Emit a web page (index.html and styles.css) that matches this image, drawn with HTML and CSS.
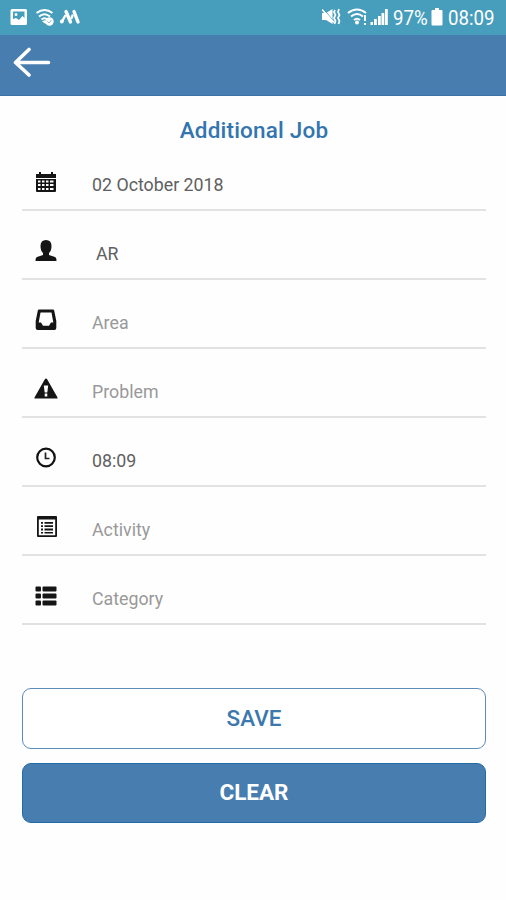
FILE: index.html
```html
<!DOCTYPE html>
<html lang="en">
<head>
<meta charset="utf-8">
<title>Additional Job</title>
<link rel="stylesheet" href="styles.css">
</head>
<body>
<header class="status">
  <svg class="status-left" width="72" height="20" viewBox="0 0 72 20" fill="#fff">
    <path fill-rule="evenodd" d="M2 1h13.500q1.500 0 1.500 1.500v13q0 1.500-1.500 1.500H2Q.500 17 .500 15.500v-13Q.500 1 2 1zM3 3.500v7.500l3-1 3 2 3.500-4 2 2V3.500zM6 5a1.500 1.500 0 1 1 0 3 1.500 1.500 0 0 1 0-3z"/>
    <g fill="none" stroke="#fff" stroke-width="2"><path d="M26.500 5q8-6 16 0M29 8.500q5.500-4.500 11 0M31.500 11.500q3-2.500 6 0"/></g>
    <path d="M32 13.500l3-1.500 2 3-1 1z"/><circle cx="39.500" cy="13.500" r="4.200"/><path d="M37.500 13.500l1.500 1.500 2.500-3" stroke="#8fc3d6" fill="none"/>
    <g stroke="#fff" stroke-width="3.400" stroke-linecap="round"><path d="M56 3.500l4.500 10.500M64 3.500l4 10.500"/><path d="M55 8l-3 5.500M62.500 7.500l-1 2.500" stroke-width="2.400"/></g><circle cx="51.800" cy="13.500" r="1.900"/>
  </svg>
  <div class="status-right">
    <svg width="70" height="20" viewBox="0 0 70 20" fill="#fff">
      <path d="M0 5h4l6.500-4v15L4 12H0z"/><path d="M1 .5l11 13" stroke="#479dbc" stroke-width="1"/><path d="M0 1.500l12 13" stroke="#fff" stroke-width="1.600"/>
      <path d="M13 2l-1 2 1.500 3-1.500 3 1.500 3-1 3M17 1l-1 3 1.500 3-1.500 3 1.500 3-1 3" fill="none" stroke="#fff" stroke-width="1.700"/>
      <g fill="none" stroke="#fff" stroke-width="2"><path d="M26 5q9-7 18 0M29 8.500q6-5 12 0M32 12q3-2.500 6 0"/></g><circle cx="35" cy="14.500" r="2"/>
      <path d="M42 7h1.900v6H42zM42 15h1.900v2H42z"/>
      <path d="M48.500 14h2.500v3h-2.500zM52 11h2.800v6H52zM56 8h2.800v9H56zM59.500 5h2.800v12h-2.800zM63 1h2.800v16H63z"/>
    </svg>
    <span class="percent"><span>97%</span></span>
    <svg class="battery" width="12" height="18" viewBox="0 0 12 18" fill="#fff"><path d="M4 0h4v2h2.500q1 0 1 1v13.500q0 1-1 1h-9q-1 0-1-1V3q0-1 1-1H4z"/></svg>
    <span class="time"><span>08:09</span></span>
  </div>
</header>
<nav class="bar">
  <svg width="38" height="30" viewBox="0 0 38 30" fill="none" stroke="#fff" stroke-width="3.600"><path d="M35.500 15.500H3M16 2.500L2.500 15.500 16 28" stroke-linecap="round" stroke-linejoin="round"/></svg>
</nav>
<main>
  <h1>Additional Job</h1>
  <ul class="fields">
    <li><svg viewBox="0 0 22 22"><path fill-rule="evenodd" d="M1 3h3V1h2v2h10V1h2v2h3v4H1zM1 8h20v12q0 1-1 1H2q-1 0-1-1zM3 9.500v2h2.500v-2zM7 9.500v2h2.500v-2zM11 9.500v2h2.500v-2zM15 9.500v2h3.500v-2zM3 13v2h2.500v-2zM7 13v2h2.500v-2zM11 13v2h2.500v-2zM15 13v2h3.500v-2zM3 17v2h2.500v-2zM7 17v2h2.500v-2zM11 17v2h2.500v-2zM15 17v2h3.500v-2z"/></svg><span class="date">02 October 2018</span></li>
    <li><svg viewBox="0 0 22 22"><path d="M5.500 6Q5.500 0 11 0t5.500 6q0 5-2.500 7v2l6 2q1.500.500 1.500 4h-21q0-3.500 1.500-4l6-2v-2Q5.500 11 5.500 6z"/></svg><span class="person">AR</span></li>
    <li><svg viewBox="0 0 22 22"><path fill-rule="evenodd" d="M4 .5h14q1 0 1.200 1L21.300 12v7q0 2-2 2H2.700q-2 0-2-2v-7L2.800 1.500Q3 .5 4 .5zM5.500 3.500L3.700 13.500H6l2 3.300h6l2-3.300h2.300l-1.800-10z"/></svg><span class="hint area">Area</span></li>
    <li><svg class="warn" viewBox="0 0 24 22"><path fill-rule="evenodd" d="M12 .5Q12.700.5 13.300 1.500L23.500 19.500q.500 1-.500 1H1q-1 0-.500-1L10.700 1.500Q11.300.5 12 .5zM9.800 7.500l.9 7h2.600l.9-7zM10.700 15.500v3h2.600v-3z"/></svg><span class="hint problem">Problem</span></li>
    <li><svg viewBox="0 0 22 22"><circle cx="11" cy="10.500" r="8.800" fill="none" stroke="#111" stroke-width="2.200"/><path d="M10.500 5.500v6H14.500" fill="none" stroke="#222" stroke-width="1.700"/></svg><span class="clock">08:09</span></li>
    <li><svg class="form" viewBox="0 0 22 22"><path fill-rule="evenodd" d="M2 0h18q1 0 1 1v19q0 1-1 1H2q-1 0-1-1V1q0-1 1-1zM2.800 3.500v15.800h16.400V3.500z"/><path d="M5 6h2v1.800H5zM8.500 6H17v1.800H8.500zM5 9.300h2v1.800H5zM8.500 9.300H17v1.800H8.500zM5 12.600h2v1.800H5zM8.500 12.600H17v1.800H8.500zM5 16h2v1.600H5zM8.500 16H17v1.600H8.500z"/></svg><span class="hint activity">Activity</span></li>
    <li><svg viewBox="0 0 22 22"><g><rect x=".5" y="1.500" width="5.500" height="5" rx="1"/><rect x="7.500" y="1.500" width="14" height="5" rx="1"/><rect x=".5" y="8.500" width="5.500" height="5" rx="1"/><rect x="7.500" y="8.500" width="14" height="5" rx="1"/><rect x=".5" y="15.500" width="5.500" height="5" rx="1"/><rect x="7.500" y="15.500" width="14" height="5" rx="1"/></g></svg><span class="hint category">Category</span></li>
  </ul>
  <button class="save">SAVE</button>
  <button class="clear">CLEAR</button>
</main>
</body>
</html>
```
FILE: styles.css
```css
* { box-sizing: border-box; }
body { margin: 0; height: 900px; background: #fefefe; font-family: Roboto, "Liberation Sans", sans-serif; overflow: hidden; }
svg { display: block; flex: none; }
.status { height: 35px; background: #479dbc; display: flex; justify-content: space-between; align-items: flex-start; padding: 8px 10px 0 10px; color: #fff; }
.status-right { display: flex; align-items: flex-start; font-size: 21px; line-height: 20px; }
.percent { width: 35px; margin-left: 1px; }
.time { width: 48px; margin-left: 5px; }
.percent span, .time span { display: block; width: max-content; transform: scaleX(.89); transform-origin: 0 0; }
.battery { margin-left: 3px; }
.bar { height: 61px; background: #487db0; border-bottom: 1px solid #3973a6; padding: 12px 13px; }
main { padding: 0 20px 0 22px; }
h1 { margin: 20px 0 0; height: 28px; line-height: 28px; font-size: 22.5px; letter-spacing: .2px; font-weight: 500; color: #3275af; text-align: center; }
.fields { list-style: none; margin: 0; padding: 0; }
li { height: 69px; display: flex; align-items: flex-start; padding: 29px 0 0 12.500px; border-bottom: 2px solid #e2e2e2; }
li:first-child { height: 67px; padding-top: 27px; }
li svg { width: 22px; height: 22px; margin-right: 35.500px; fill: #151515; }
li svg.warn { width: 24px; margin: 0 34.500px 0 -1px; }
li svg.form { margin: 0 34.500px 0 1px; }
li span { font-size: 17.800px; line-height: 22px; margin-top: 3px; color: #606060; }
li .hint { color: #999; }
li .person { margin-left: 4px; }
button { display: block; width: 464px; height: 61px; padding: 0; border: 1.500px solid #5b8cba; border-radius: 9px; font: 500 22.500px/58px Roboto, sans-serif; }
.save { margin-top: 63px; padding-bottom: 2px; background: #fff; color: #3c78ae; }
.clear { margin-top: 14px; height: 60px; padding-bottom: 2px; line-height: 56px; background: #487db0; border-color: #226ba5; color: #fff; font-weight: 700; }
```
